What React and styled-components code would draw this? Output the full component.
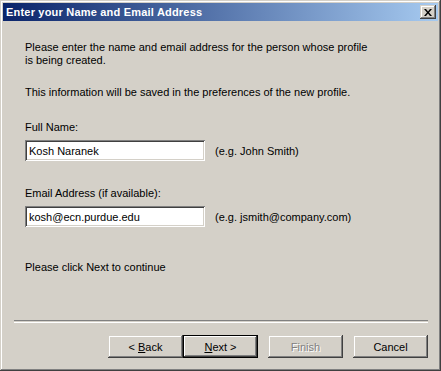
import React from 'react'
import styled, { createGlobalStyle, css } from 'styled-components'

const GlobalStyle = createGlobalStyle`
    html, body {
        margin: 0;
        padding: 0;
        background: #d4d0c8;
    }
    body {
        font-family: "Liberation Sans", Arial, sans-serif;
        font-size: 11px;
        color: #000;
    }
`;

/* raised 3d frame, classic windows style */
const raised = css`
    box-shadow:
        inset -1px -1px #404040,
        inset 1px 1px #d4d0c8,
        inset -2px -2px #808080,
        inset 2px 2px #ffffff;
`;

const Window = styled.div`
    width: 441px;
    height: 371px;
    box-sizing: border-box;
    padding: 3px;
    background: #d4d0c8;
    display: flex;
    flex-direction: column;
    ${raised};
`;

const TitleBar = styled.div`
    height: 18px;
    display: flex;
    align-items: center;
    justify-content: space-between;
    padding: 0 2px 0 3px;
    background: linear-gradient(to right, #0a246a, #a6caf0);
    color: #fff;
    font-family: "Liberation Sans", Arial, sans-serif;
    font-weight: bold;
    font-size: 11px;
    letter-spacing: 0.2px;
`;

const CloseButton = styled.div`
    width: 16px;
    height: 14px;
    background: #d4d0c8;
    display: flex;
    align-items: center;
    justify-content: center;
    ${raised};
`;

const Body = styled.div`
    flex: 1;
    display: flex;
    flex-direction: column;
    padding: 20px 0 0 22px;
`;

const Para = styled.p`
    margin: ${props => props.top || 0}px 0 ${props => props.gap || 0}px 0;
    line-height: 13px;
    width: 352px;
`;

const Label = styled.div`
    line-height: 13px;
    margin-bottom: 6px;
`;

const FieldRow = styled.div`
    display: flex;
    align-items: center;
    gap: 10px;
    margin-bottom: ${props => props.gap || 0}px;
`;

const Input = styled.div`
    width: 180px;
    height: 21px;
    box-sizing: border-box;
    padding: 0 4px;
    display: flex;
    align-items: center;
    background: #fff;
    box-shadow:
        inset 1px 1px #808080,
        inset -1px -1px #ffffff,
        inset 2px 2px #404040,
        inset -2px -2px #d4d0c8;
`;

const Hint = styled.span``;

const Footer = styled.div`
    margin-top: auto;
    padding: 0 10px 10px 10px;
`;

const Separator = styled.div`
    height: 1px;
    border-top: 1px solid #808080;
    border-bottom: 1px solid #ffffff;
    margin: 0 0 12px 1px;
`;

const ButtonRow = styled.div`
    display: flex;
    justify-content: flex-end;
`;

const Button = styled.div`
    width: 75px;
    height: 23px;
    box-sizing: border-box;
    display: flex;
    align-items: center;
    justify-content: center;
    background: #d4d0c8;
    margin-left: ${props => props.spaced ? 10 : 0}px;
    ${raised};

    ${props => props.isDefault && css`
        box-shadow:
            inset 0 0 0 1px #000,
            inset -2px -2px #404040,
            inset 2px 2px #ffffff,
            inset -3px -3px #808080;
    `}

    ${props => props.disabled && css`
        color: #808080;
        text-shadow: 1px 1px #ffffff;
    `}

    u {
        text-decoration: underline;
    }
`;

const App = () => (
    <>
        <GlobalStyle />
        <Window>
            <TitleBar>
                <span>Enter your Name and Email Address</span>
                <CloseButton>
                    <svg width="8" height="7" viewBox="0 0 8 7">
                        <path d="M0 0h2l2 2.5L6 0h2L5 3.5 8 7H6L4 4.5 2 7H0l3-3.5z" fill="#000" />
                    </svg>
                </CloseButton>
            </TitleBar>
            <Body>
                <Para gap={19}>
                    Please enter the name and email address for the person whose profile is being created.
                </Para>
                <Para gap={22}>
                    This information will be saved in the preferences of the new profile.
                </Para>
                <Label>Full Name:</Label>
                <FieldRow gap={26}>
                    <Input>Kosh Naranek</Input>
                    <Hint>(e.g. John Smith)</Hint>
                </FieldRow>
                <Label>Email Address (if available):</Label>
                <FieldRow gap={0}>
                    <Input>kosh@ecn.purdue.edu</Input>
                    <Hint>(e.g. jsmith@company.com)</Hint>
                </FieldRow>
                <Para top={34}>Please click Next to continue</Para>
            </Body>
            <Footer>
                <Separator />
                <ButtonRow>
                    <Button><span>&lt; <u>B</u>ack</span></Button>
                    <Button isDefault><span><u>N</u>ext &gt;</span></Button>
                    <Button spaced disabled><span>Finish</span></Button>
                    <Button spaced><span>Cancel</span></Button>
                </ButtonRow>
            </Footer>
        </Window>
    </>
)

export default App
